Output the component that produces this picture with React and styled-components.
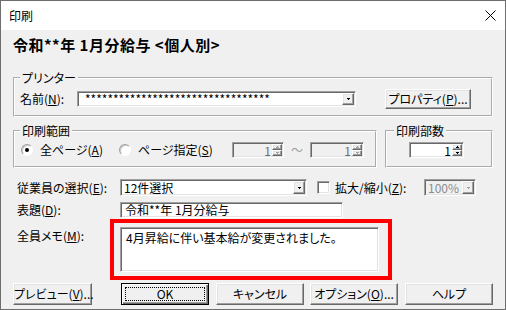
import React from 'react';
import styled, { createGlobalStyle, css } from 'styled-components';

const FONT = `"Noto Sans CJK JP", "Noto Sans", sans-serif`;

const Global = createGlobalStyle`
  html, body { margin: 0; padding: 0; background: #fff; }
  body {
    font-family: ${FONT};
    font-size: 12px;
    color: #000;
    font-feature-settings: "palt" 1;
  }
  * { box-sizing: border-box; }
  u { text-underline-offset: 1px; }
`;

const sunken = css`
  border: 1px solid;
  border-color: #a0a0a0 #fff #fff #a0a0a0;
  box-shadow: inset 1px 1px 0 #696969, inset -1px -1px 0 #e3e3e3;
`;

const raised = css`
  border: 1px solid;
  border-color: #fff #696969 #696969 #fff;
  box-shadow: inset -1px -1px 0 #a0a0a0, inset 1px 1px 0 #e3e3e3;
  background: #f0f0f0;
`;

const Window = styled.div`
  width: 506px;
  height: 310px;
  border: 1px solid #6e6e6e;
  background: #f0f0f0;
  display: flex;
  flex-direction: column;
  overflow: hidden;
`;

const TitleBar = styled.div`
  height: 29px;
  background: #fff;
  display: flex;
  align-items: center;
  justify-content: space-between;
  padding-left: 8px;
`;

const TitleText = styled.span`
  font-size: 12px;
  line-height: 14px;
  color: #000;
  font-feature-settings: normal;
`;

const CloseBox = styled.div`
  width: 30px;
  height: 29px;
  display: flex;
  align-items: center;
  justify-content: center;
`;

const Body = styled.div`
  flex: 1;
  display: flex;
  flex-direction: column;
  padding: 5px 12px 0 12px;
`;

const Heading = styled.div`
  font-size: 15px;
  font-weight: bold;
  line-height: 20px;
  letter-spacing: 0.5px;
  white-space: nowrap;
`;

const Group = styled.fieldset`
  margin: ${p => p.$mt || 0}px 0 0 0;
  padding: 0;
  min-width: 0;
  width: ${p => p.$w}px;
  border: 2px groove #fff;
`;

const Legend = styled.legend`
  margin-left: ${p => p.$ml}px;
  padding: 0 2px;
  font-size: 12px;
  line-height: 14px;
`;

const GroupRow = styled.div`
  display: flex;
  align-items: center;
  padding: ${p => p.$pt}px 0 ${p => p.$pb}px ${p => p.$pl}px;
`;

const GroupPair = styled.div`
  display: flex;
  gap: 8px;
  margin-top: ${p => p.$mt}px;
`;

const Label = styled.span`
  width: ${p => p.$w}px;
  flex: none;
  padding-left: ${p => p.$pl || 0}px;
  padding-top: ${p => p.$pt || 0}px;
  align-self: ${p => (p.$top ? 'flex-start' : 'center')};
  line-height: 14px;
  white-space: nowrap;
  margin-left: ${p => p.$ml || 0}px;
`;

const Combo = styled.div`
  ${sunken};
  width: ${p => p.$w}px;
  height: ${p => p.$h}px;
  padding: 1px;
  display: flex;
  flex: none;
  margin-left: ${p => p.$ml || 0}px;
  background: ${p => (p.$disabled ? '#f0f0f0' : '#fff')};
`;

const ComboText = styled.div`
  flex: 1;
  min-width: 0;
  padding-left: ${p => p.$pl}px;
  display: flex;
  align-items: center;
  line-height: 14px;
  white-space: nowrap;
  color: ${p => (p.$disabled ? '#8c8c8c' : '#000')};
`;

const DropBtn = styled.div`
  ${raised};
  width: 12px;
  flex: none;
  display: flex;
  align-items: center;
  justify-content: center;
`;

const Edit = styled.div`
  ${sunken};
  width: ${p => p.$w}px;
  height: ${p => p.$h}px;
  background: #fff;
  flex: none;
  padding: ${p => p.$pad};
  line-height: 14px;
  white-space: nowrap;
`;

const Button = styled.button`
  ${raised};
  width: ${p => p.$w}px;
  height: ${p => p.$h || 22}px;
  margin-left: ${p => p.$ml || 0}px;
  padding: 0;
  font-family: ${FONT};
  font-size: 12px;
  font-feature-settings: "palt" 1;
  line-height: 14px;
  color: #000;
  flex: none;
  white-space: nowrap;
  ${p =>
    p.$default &&
    css`
      border: 1px solid #000;
      box-shadow: inset 1px 1px 0 #fff, inset -1px -1px 0 #696969, inset -2px -2px 0 #a0a0a0;
      outline: 1px dotted #000;
      outline-offset: -5px;
    `}
`;

const FormRow = styled.div`
  display: flex;
  align-items: center;
  margin-top: ${p => p.$mt}px;
  height: ${p => (p.$h ? `${p.$h}px` : 'auto')};
`;

const RadioItem = styled.label`
  width: ${p => p.$w}px;
  flex: none;
  display: flex;
  align-items: center;
  gap: 7px;
  line-height: 14px;
  white-space: nowrap;
`;

const RadioCircle = styled.span`
  width: 12px;
  height: 12px;
  border-radius: 50%;
  border: 1px solid;
  border-color: #a0a0a0 #fff #fff #a0a0a0;
  box-shadow: inset 1px 1px 0 #c8c8c8;
  background: #fff;
  display: flex;
  align-items: center;
  justify-content: center;
  flex: none;
  &::after {
    content: '';
    width: 4px;
    height: 4px;
    border-radius: 50%;
    background: ${p => (p.$checked ? '#000' : 'transparent')};
  }
`;

const Spin = styled.div`
  ${sunken};
  width: ${p => p.$w}px;
  height: 16px;
  padding: 1px;
  display: flex;
  flex: none;
  background: ${p => (p.$disabled ? '#f0f0f0' : '#fff')};
`;

const SpinValue = styled.div`
  flex: 1;
  text-align: right;
  padding-right: 1px;
  line-height: 13px;
  color: ${p => (p.$disabled ? '#6d6d6d' : '#000')};
`;

const SpinBtns = styled.div`
  width: 10px;
  display: flex;
  flex-direction: column;
`;

const SpinBtn = styled.div`
  ${raised};
  flex: 1;
  display: flex;
  align-items: center;
  justify-content: center;
`;

const Tilde = styled.span`
  width: 26px;
  flex: none;
  text-align: center;
  color: #a0a0a0;
  line-height: 14px;
`;

const Check = styled.span`
  ${sunken};
  width: 13px;
  height: 13px;
  background: #fff;
  margin-left: ${p => p.$ml}px;
  flex: none;
`;

const Highlight = styled.div`
  width: 282px;
  height: 61px;
  border: 4px solid #ff0000;
  padding: 4px 9px 4px 6px;
  flex: none;
`;

const ButtonRow = styled.div`
  display: flex;
  margin-top: ${p => p.$mt}px;
`;

const Arrow = ({ dir = 'down', color = '#000' }) => (
  <svg width="3" height="2" viewBox="0 0 3 2" style={{ display: 'block' }}>
    {dir === 'down' ? (
      <>
        <rect x="0" y="0" width="3" height="1" fill={color} />
        <rect x="1" y="1" width="1" height="1" fill={color} />
      </>
    ) : (
      <>
        <rect x="1" y="0" width="1" height="1" fill={color} />
        <rect x="0" y="1" width="3" height="1" fill={color} />
      </>
    )}
  </svg>
);

const Spinner = ({ w, value, disabled }) => (
  <Spin $w={w} $disabled={disabled}>
    <SpinValue $disabled={disabled}>{value}</SpinValue>
    <SpinBtns>
      <SpinBtn>
        <Arrow dir="up" color={disabled ? '#a0a0a0' : '#000'} />
      </SpinBtn>
      <SpinBtn>
        <Arrow dir="down" color={disabled ? '#a0a0a0' : '#000'} />
      </SpinBtn>
    </SpinBtns>
  </Spin>
);

export default function App() {
  return (
    <>
      <Global />
      <Window>
        <TitleBar>
          <TitleText>印刷</TitleText>
          <CloseBox>
            <svg width="11" height="11" viewBox="0 0 11 11">
              <path d="M0.5 0.5 L10.5 10.5 M10.5 0.5 L0.5 10.5" stroke="#000" strokeWidth="1" />
            </svg>
          </CloseBox>
        </TitleBar>
        <Body>
          <Heading>令和**年 1月分給与 &lt;個人別&gt;</Heading>

          <Group $mt={16} $w={480}>
            <Legend $ml={5}>プリンター</Legend>
            <GroupRow $pt={4} $pb={6} $pl={5}>
              <Label $w={57}>
                名前(<u>N</u>):
              </Label>
              <Combo $w={279} $h={16}>
                <ComboText $pl={6}>{'*'.repeat(33)}</ComboText>
                <DropBtn>
                  <Arrow />
                </DropBtn>
              </Combo>
              <Button $w={86} $h={20} $ml={29}>
                プロパティ(<u>P</u>)...
              </Button>
            </GroupRow>
          </Group>

          <GroupPair $mt={7}>
            <Group $w={364}>
              <Legend $ml={5}>印刷範囲</Legend>
              <GroupRow $pt={4} $pb={8} $pl={6}>
                <RadioItem $w={98}>
                  <RadioCircle $checked />
                  <span>
                    全ページ(<u>A</u>)
                  </span>
                </RadioItem>
                <RadioItem $w={113}>
                  <RadioCircle />
                  <span>
                    ページ指定(<u>S</u>)
                  </span>
                </RadioItem>
                <Spinner w={52} value="1" disabled />
                <Tilde>～</Tilde>
                <Spinner w={54} value="1" disabled />
              </GroupRow>
            </Group>
            <Group $w={108}>
              <Legend $ml={7}>印刷部数</Legend>
              <GroupRow $pt={4} $pb={8} $pl={22}>
                <Spinner w={55} value="1" />
              </GroupRow>
            </Group>
          </GroupPair>

          <FormRow $mt={11} $h={17}>
            <Label $w={107} $pl={4}>
              従業員の選択(<u>E</u>):
            </Label>
            <Combo $w={187} $h={17}>
              <ComboText $pl={2}>12件選択</ComboText>
              <DropBtn>
                <Arrow />
              </DropBtn>
            </Combo>
            <Check $ml={10} />
            <Label $w={89} $ml={5}>
              拡大/縮小(<u>Z</u>):
            </Label>
            <Combo $w={52} $h={17} $disabled>
              <ComboText $pl={2} $disabled>
                100%
              </ComboText>
              <DropBtn>
                <Arrow color="#a0a0a0" />
              </DropBtn>
            </Combo>
          </FormRow>

          <FormRow $mt={6} $h={16}>
            <Label $w={107} $pl={4}>
              表題(<u>D</u>):
            </Label>
            <Edit $w={223} $h={16} $pad="0 0 0 4px">
              令和**年 1月分給与
            </Edit>
          </FormRow>

          <FormRow $mt={1}>
            <Label $w={97} $pl={4} $pt={10} $top>
              全員メモ(<u>M</u>):
            </Label>
            <Highlight>
              <Edit $w={259} $h={45} $pad="3px 0 0 5px">
                4月昇給に伴い基本給が変更されました。
              </Edit>
            </Highlight>
          </FormRow>

          <ButtonRow $mt={3}>
            <Button $w={79}>
              プレビュー(<u>V</u>)...
            </Button>
            <Button $w={88} $ml={29} $default>
              OK
            </Button>
            <Button $w={88} $ml={7}>
              キャンセル
            </Button>
            <Button $w={88} $ml={6}>
              オプション(<u>O</u>)...
            </Button>
            <Button $w={88} $ml={7}>
              ヘルプ
            </Button>
          </ButtonRow>
        </Body>
      </Window>
    </>
  );
}
